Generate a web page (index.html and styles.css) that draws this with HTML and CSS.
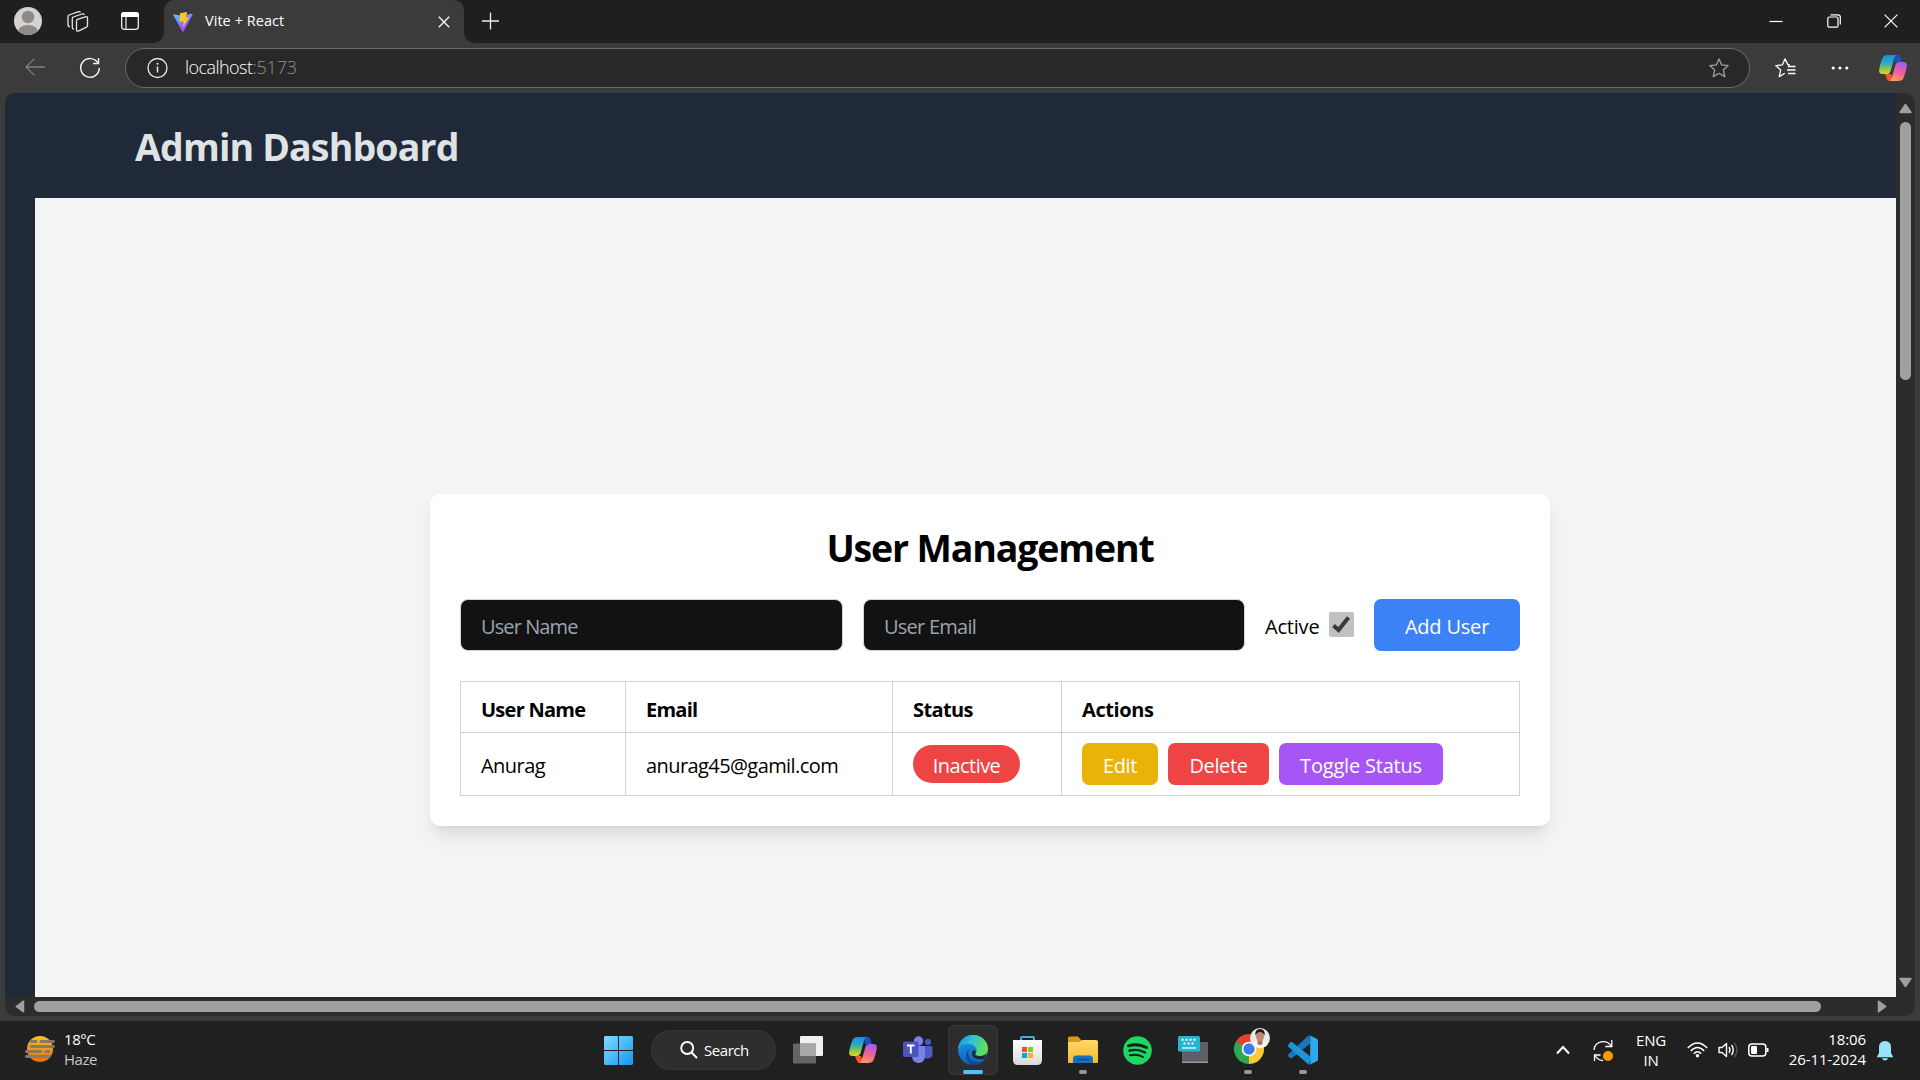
FILE: index.html
```html
<!DOCTYPE html>
<html lang="en">
<head>
<meta charset="utf-8">
<title>Vite + React</title>
<link rel="stylesheet" href="styles.css">
</head>
<body>
<svg class="defs" width="0" height="0">
  <defs>
    <linearGradient id="cpA" x1="0" y1="0" x2="0" y2="1"><stop offset="0" stop-color="#1a8bea"/><stop offset=".4" stop-color="#2aa9c0"/><stop offset=".75" stop-color="#8ecb4a"/><stop offset="1" stop-color="#f2d01c"/></linearGradient>
    <linearGradient id="cpB" x1=".6" y1="0" x2=".3" y2="1"><stop offset="0" stop-color="#a35df0"/><stop offset=".5" stop-color="#f0609b"/><stop offset="1" stop-color="#ff9a5c"/></linearGradient>
    <linearGradient id="winG" x1="0" y1="0" x2="1" y2="1"><stop offset="0" stop-color="#7fdcfb"/><stop offset="1" stop-color="#1597f3"/></linearGradient>
    <linearGradient id="viteG" x1="0" y1="0" x2=".6" y2="1"><stop offset="0" stop-color="#41d1ff"/><stop offset="1" stop-color="#bd34fe"/></linearGradient>
    <linearGradient id="edgeG" x1="0" y1="0" x2="1" y2=".3"><stop offset="0" stop-color="#1b8ede"/><stop offset=".5" stop-color="#33c1d8"/><stop offset="1" stop-color="#63e052"/></linearGradient>
    <linearGradient id="edgeB" x1="0" y1="0" x2="0" y2="1"><stop offset="0" stop-color="#1b9de2"/><stop offset="1" stop-color="#0c62bd"/></linearGradient>
    <linearGradient id="sunG" x1="0" y1="0" x2="0" y2="1"><stop offset="0" stop-color="#fcc21b"/><stop offset="1" stop-color="#e86e10"/></linearGradient>
    <linearGradient id="folderG" x1="0" y1="0" x2="0" y2="1"><stop offset="0" stop-color="#ffd968"/><stop offset="1" stop-color="#f7b92c"/></linearGradient>
    <linearGradient id="bagG" x1="0" y1="0" x2="0" y2="1"><stop offset="0" stop-color="#ffffff"/><stop offset="1" stop-color="#d9d9d9"/></linearGradient>
    <symbol id="copilot" viewBox="0 0 28 26">
      <path d="M15 0h3.500c2 0 2.600 1.300 3.100 3l1 4H16z" fill="#1b50c8"/>
      <path d="M6 19h6l2 7h-3c-2 0-3-1-3.500-3z" fill="#f4572d"/>
      <path d="M9 0h9c-2 .8-2.600 2.500-3.300 5l-3 10.500C11 18 10 19 7.500 19H3.500C1 19-.3 17.500.2 14.500 1 10 2.200 6 3.500 3 4.500.8 6 0 9 0z" fill="url(#cpA)"/>
      <path d="M19 26h-9c2-.8 2.600-2.500 3.300-5l3-10.500C17 8 18 7 20.500 7h4c2.500 0 3.800 1.500 3.300 4.500C27 16 25.800 20 24.500 23c-1 2.200-2.500 3-5.500 3z" fill="url(#cpB)"/>
    </symbol>
  </defs>
</svg>

<div class="screen">
  <header class="tabstrip">
    <div class="tools">
      <svg class="avatar" width="28" height="28" viewBox="0 0 28 28"><clipPath id="av"><circle cx="14" cy="14" r="14"/></clipPath><g clip-path="url(#av)"><rect width="28" height="28" fill="#d5d3d1"/><circle cx="14" cy="10" r="6.200" fill="#8d8a88"/><ellipse cx="14" cy="24.500" rx="10" ry="6.500" fill="#8d8a88"/></g></svg>
      <svg class="ic-spaces" width="22" height="22" viewBox="0 0 22 22" fill="none" stroke="#e6e6e6" stroke-width="1.300" stroke-linejoin="round"><path d="M9.500 10q0-1.200 1-1.600l8-2.600q2-.6 2 1v7.700q0 1.200-1 1.600l-7.700 3.700q-2.300 1-2.300-1z"/><path d="M7 18q-1.700.2-1.700-1.800V7.500q0-1 1-1.500L15 3q1.500-.5 2.300.8"/><path d="M3 15.500q-2 .2-2-1.800V5.500q0-1 1-1.500L11 .9q1.700-.6 2.500.6"/></svg>
      <svg class="ic-vtabs" width="18" height="18" viewBox="0 0 18 18"><rect x=".7" y=".7" width="16.600" height="16.600" rx="2.500" fill="none" stroke="#eee" stroke-width="1.300"/><path d="M0 5V3q0-3 3-3h12q3 0 3 3v2z" fill="#fff"/><path d="M5 5v12" stroke="#eee" stroke-width="1.200"/></svg>
    </div>
    <div class="tab">
      <svg width="20" height="20" viewBox="0 0 20 20"><path d="M0 2.200 8 3.500 18 1.800Q20 1.800 19.500 3L10.500 19.500q-.6.800-1.200 0L.2 3z" fill="url(#viteG)"/><path d="m7 1.200 6.500-1.200q.8 0 .5.800L12.500 5l3 .3q.6.100.3.800L10 15l.8-5.500H7q-.6 0-.5-.7z" fill="#ffc81f"/></svg>
      <span class="tab-title">Vite + React</span>
      <svg class="tab-close" width="12" height="12" viewBox="0 0 12 12" stroke="#f2f2f2" stroke-width="1.400"><path d="M.8.800l10.400 10.400M11.200.8.800 11.200"/></svg>
    </div>
    <svg class="plus" width="18" height="18" viewBox="0 0 18 18" stroke="#f0f0f0" stroke-width="1.300"><path d="M8.500.5v17M0 9h17"/></svg>
    <div class="winbtns">
      <svg width="14" height="14" viewBox="0 0 14 14" stroke="#fff" stroke-width="1.200"><path d="M.5 7.500h13"/></svg>
      <svg width="14" height="14" viewBox="0 0 14 14" stroke="#fff" stroke-width="1.200" fill="none"><rect x=".8" y="3" width="10.200" height="10.200" rx="1.500"/><path d="M3.500.8h7.500q2.300 0 2.300 2.300v7.500"/></svg>
      <svg width="14" height="14" viewBox="0 0 14 14" stroke="#fff" stroke-width="1.200"><path d="M.6.600l12.800 12.800M13.400.6.600 13.400"/></svg>
    </div>
  </header>

  <nav class="toolbar">
    <svg class="back" width="20" height="18" viewBox="0 0 20 18" fill="none" stroke="#808080" stroke-width="1.300"><path d="M9.500.6 1 9l8.500 8.400M1 9h19"/></svg>
    <svg class="reload" width="22" height="22" viewBox="0 0 22 22" fill="none" stroke="#f0f0f0" stroke-width="1.500"><path d="M18.900 6A9.300 9.300 0 1 0 20.300 11M14 6.500h5.500V1"/></svg>
    <div class="address">
      <svg width="22" height="22" viewBox="0 0 22 22"><circle cx="11.500" cy="11" r="9.500" fill="none" stroke="#e8e8e8" stroke-width="1.300"/><path d="M11.500 9.500v6" stroke="#e8e8e8" stroke-width="1.500"/><circle cx="11.500" cy="6.700" r="1" fill="#e8e8e8"/></svg>
      <span class="url">localhost<span class="port">:5173</span></span>
      <svg class="star" width="20" height="20" viewBox="0 0 20 20" fill="none" stroke="#a0a0a0" stroke-width="1.300" stroke-linejoin="round"><path d="m10 .9 2.700 6 6.500.7-4.900 4.300 1.500 6.700-5.800-3.400-5.800 3.400 1.500-6.700L.8 7.600l6.500-.7z"/></svg>
    </div>
    <svg class="favs" width="21" height="20" viewBox="0 0 21 20" fill="none" stroke="#fff" stroke-width="1.300" stroke-linejoin="round"><path d="M15 6.900h-2L10 .9l-2.700 6-6.500.7 4.900 4.300-1.500 6.700 5.600-3.300M13 8.500h7.500M12 12h8.500M13 15.500h7.500"/></svg>
    <svg class="more" width="18" height="4" viewBox="0 0 18 4" fill="#fff"><circle cx="2.200" cy="2" r="1.600"/><circle cx="9" cy="2" r="1.600"/><circle cx="15.800" cy="2" r="1.600"/></svg>
    <svg class="cp" width="28" height="26"><use href="#copilot"/></svg>
  </nav>

  <div class="frame">
    <div class="viewport">
      <main class="page">
        <h1 class="page-title">Admin Dashboard</h1>
        <section class="content">
          <div class="card">
            <h2 class="card-title">User Management</h2>
            <form class="form">
              <div class="field name"><span class="ph-name">User Name</span></div>
              <div class="field"><span class="ph-email">User Email</span></div>
              <label class="active"><span class="active-text">Active</span>
                <svg width="25" height="25" viewBox="0 0 25 25"><rect width="25" height="25" rx="1.500" fill="#c1c1c1"/><path d="m4.500 13.500 5 4.500L19.500 5.500" fill="none" stroke="#3a3a3a" stroke-width="4"/></svg>
              </label>
              <div class="btn add"><span>Add User</span></div>
            </form>
            <div class="table">
              <div class="row head">
                <div class="cell"><span class="th-name">User Name</span></div><div class="cell"><span class="th-email">Email</span></div><div class="cell"><span class="th-status">Status</span></div><div class="cell"><span class="th-actions">Actions</span></div>
              </div>
              <div class="row body">
                <div class="cell"><span class="td-name">Anurag</span></div><div class="cell"><span class="td-email">anurag45@gamil.com</span></div>
                <div class="cell"><span class="pill"><span>Inactive</span></span></div>
                <div class="cell actions"><div class="btn edit"><span>Edit</span></div><div class="btn delete"><span>Delete</span></div><div class="btn toggle"><span>Toggle Status</span></div></div>
              </div>
            </div>
          </div>
        </section>
      </main>
      <div class="vbar">
        <svg width="13" height="11" viewBox="0 0 13 11"><path d="M6.500 1.500 12 9.500H1z" fill="#a0a0a0" stroke="#a0a0a0" stroke-width="1.500" stroke-linejoin="round"/></svg>
        <div class="vthumb"></div>
        <svg class="down" width="13" height="11" viewBox="0 0 13 11"><path d="M6.500 9.500 12 1.500H1z" fill="#a0a0a0" stroke="#a0a0a0" stroke-width="1.500" stroke-linejoin="round"/></svg>
      </div>
      <div class="hbar">
        <svg width="10" height="13" viewBox="0 0 10 13"><path d="M1.200 6.500 8.500 1.200v10.600z" fill="#a0a0a0" stroke="#a0a0a0" stroke-width="1.500" stroke-linejoin="round"/></svg>
        <div class="hthumb"></div>
        <svg class="right" width="10" height="13" viewBox="0 0 10 13"><path d="M8.800 6.500 1.500 1.200v10.600z" fill="#a0a0a0" stroke="#a0a0a0" stroke-width="1.500" stroke-linejoin="round"/></svg>
      </div>
    </div>
  </div>

  <footer class="taskbar">
    <div class="weather">
      <svg width="30" height="26" viewBox="0 0 30 26"><circle cx="15" cy="13" r="13" fill="url(#sunG)"/><g stroke="#87796a" stroke-width="2.800" stroke-linecap="round"><path d="M6 5.500h5M16 5.500h12.500M6 10.500h22.500M1.500 15.500h14M21 15.500h3M1.500 20.500h23"/></g></svg>
      <div class="wtext"><span class="temp">18°C</span><span class="haze">Haze</span></div>
    </div>
    <div class="apps">
      <div class="app"><svg width="29" height="29" viewBox="0 0 29 29" fill="url(#winG)"><path d="M1 0h13v14H0V1zM15 0h13l1 1v13H15zM0 15h14v14H1l-1-1zM15 15h14v13l-1 1H15z"/></svg></div>
      <div class="search"><svg width="18" height="18" viewBox="0 0 18 18" fill="none" stroke="#fff" stroke-width="1.900"><circle cx="7.200" cy="7" r="6"/><path d="m11.500 11.500 5.500 5.500"/></svg><span>Search</span></div>
      <div class="app"><svg width="30" height="28" viewBox="0 0 30 28"><rect x="7" width="23" height="20" rx="1.200" fill="#f0f0f0"/><rect y="7.500" width="23" height="20" rx="1.200" fill="#6d6d6d" opacity=".9"/><path d="M7 7.500h16V20H7z" fill="#a8a8a8"/></svg></div>
      <div class="app"><svg width="28" height="26"><use href="#copilot"/></svg></div>
      <div class="app"><svg width="30" height="28" viewBox="0 0 30 28"><circle cx="15.500" cy="5" r="4.700" fill="#7b83eb"/><circle cx="25" cy="6" r="3" fill="#5059c9"/><path d="M20 10h8q1.500 0 1.500 1.500v6q0 5-5 5t-5-4z" fill="#5059c9"/><path d="M9 10h13v10q-.5 7-6.500 7T9 20z" fill="#7b83eb"/><rect y="5.500" width="15.500" height="15.500" rx="1.500" fill="#4b53bc"/><path d="M4 9.500h7.500M7.800 9.500v8" stroke="#fff" stroke-width="1.900"/></svg></div>
      <div class="app current"><svg width="30" height="30" viewBox="0 0 30 30"><circle cx="15" cy="15" r="15" fill="url(#edgeB)"/><path d="M0 14C1 5 7.500 0 15 0c9 0 15 6.500 15 13.500 0 5-4 7.500-8 7.500-3 0-5-1-4.500-2.300 3-3.200.5-9.700-7-9.700-5 0-9 2-10.500 5z" fill="url(#edgeG)"/><path d="M11 14c-3 7 2 13 10 13 3 0 5-1 6.500-2.500C24 29 20 30 16 30 8 29 6 18 11 14z" fill="#114a8b"/><path d="M17.500 18.700C16.500 20 18 21 22 21c3 0 5.500-.8 7-3l-1.800 5.500c-5 2-13 .5-13.200-4.500 0-2 .5-3.500 2-4 1.500.7 2.500 2.200 1.500 3.700z" fill="#252a2e"/></svg><i class="ind wide"></i></div>
      <div class="app store"><svg width="29" height="29" viewBox="0 0 29 29"><path d="M8 5V2q0-1 1-1h11q1 0 1 1v3" fill="none" stroke="#35b3e8" stroke-width="2"/><path d="M0 4h29v20q0 5-5 5H5q-5 0-5-5z" fill="url(#bagG)"/><path d="M9 11h5v5H9z" fill="#f1511b"/><path d="M15 11h5v5h-5z" fill="#80cc28"/><path d="M9 17h5v5H9z" fill="#00a4ef"/><path d="M15 17h5v5h-5z" fill="#fbb50a"/></svg></div>
      <div class="app"><svg width="30" height="28" viewBox="0 0 30 28"><path d="M0 8V2Q0 .5 1.500.5H10l3 3.500V8z" fill="#d99a1a"/><path d="M0 6h11l3-2h14q2 0 2 2v20q0 1-1 1H1q-1 0-1-1z" fill="url(#folderG)"/><path d="M5 27v-4q0-3.500 3.500-3.500h13q3.500 0 3.500 3.500v4z" fill="#1470c0"/><path d="M9 23.500h12" stroke="#0b4f93" stroke-width="1.500"/></svg><i class="ind"></i></div>
      <div class="app spot"><svg width="29" height="29" viewBox="0 0 29 29"><circle cx="14.500" cy="14.500" r="14.300" fill="#1ed760"/><g fill="none" stroke="#152018" stroke-linecap="round"><path d="M5.500 9.800q9.500-2.800 18 1.700" stroke-width="2.900"/><path d="M6.500 14.700q8-2.300 15.500 1.800" stroke-width="2.400"/><path d="M7 19.300q7-1.800 13 1.700" stroke-width="2"/></g></svg></div>
      <div class="app"><svg width="30" height="28" viewBox="0 0 30 28"><rect x="4" y="6" width="26" height="21" rx="1" fill="#5d6166"/><path d="M4 25.500h26V27H4z" fill="#94989c"/><rect width="22" height="15.500" rx="1.500" fill="#28b3cf"/><g stroke="#fff" stroke-width="2" stroke-dasharray="2 2"><path d="M3.500 3.800h16M5.500 7.500h12"/></g><path d="M4 12h14" stroke="#d5f4fa" stroke-width="1.500"/></svg></div>
      <div class="app"><svg class="chrome" width="38" height="38" viewBox="0 0 38 38"><path d="M17 21 4 13.500A15 15 0 0 1 30 13.500z" fill="#e8402f"/><path d="M17 21 30 13.500A15 15 0 0 1 17 36z" fill="#fcc934"/><path d="M17 21 17 36A15 15 0 0 1 4 13.500z" fill="#2da94f"/><path d="M10.500 24.500 4 13.500 17 14z" fill="#2da94f"/><path d="M4 13.500h26L17 14.200l-6.400 3z" fill="#e8402f"/><path d="m23 25-6 11 2-8z" fill="#fcc934"/><circle cx="17" cy="21" r="7.300" fill="#fff"/><circle cx="17" cy="21" r="5.700" fill="#3b7de9"/><circle cx="28" cy="10" r="10" fill="#e9e8ea"/><path d="M20.500 17q2-4 7.500-4t7.500 4q-3 3-7.500 3t-7.500-3z" fill="#faf7f7"/><path d="M25.500 11h5v5q-2.500 2-5 0z" fill="#a5705d"/><ellipse cx="28" cy="8" rx="4" ry="5.500" fill="#bd8873"/><path d="M23.500 7.500Q22.500 1 28 1t4.500 6.500Q31 4 28 4t-4.500 3.500z" fill="#241a19"/></svg><i class="ind"></i></div>
      <div class="app"><svg width="30" height="30" viewBox="0 0 30 30"><path d="M0 19.500 21 0l2 8L4 23l-1.500.5L0 21z" fill="#1678b8"/><path d="M0 10.500 2.500 7 4 7l19 15-2 8L0 11.500z" fill="#1d93d8"/><path d="M21.500.2 28 3.300q2 1 2 2.500v18.400q0 1.500-2 2.500l-6.500 3.100q.7-.8.700-2.300V2.500q0-1.500-.7-2.300z" fill="#2ba8ee"/></svg><i class="ind"></i></div>
    </div>
    <div class="tray">
      <svg class="chev" width="14" height="10" viewBox="0 0 14 10" fill="none" stroke="#fff" stroke-width="2"><path d="m1 8.500 6-6.500 6 6.500"/></svg>
      <svg class="upd" width="21" height="22" viewBox="0 0 21 22" fill="none" stroke="#fff" stroke-width="1.300"><path d="M1 10A9.200 9 0 0 1 18 6M18.800 0v6.500h-6.500M1.500 21v-6h6M2 15.500q3 5 8 5"/><circle cx="15" cy="16" r="5" fill="#ff9800" stroke="none"/></svg>
      <div class="lang"><span>ENG</span><span>IN</span></div>
      <svg class="wifi" width="21" height="16" viewBox="0 0 21 16" fill="none" stroke="#fff" stroke-width="1.500"><path d="M.8 6Q10.500-4 20.200 6M3.800 9q6.700-7 13.400 0M6.800 11.800q3.700-4 7.400 0"/><circle cx="10.500" cy="13.800" r="1.700" fill="#fff" stroke="none"/></svg>
      <svg class="vol" width="20" height="16" viewBox="0 0 20 16" fill="none" stroke="#fff" stroke-width="1.400" stroke-linejoin="round"><path d="M1 5.500h3L8.500 1.500v13L4 10.500H1zM11 5.200q2 2.800 0 5.600M13.500 3q3.500 5 0 10"/><path d="M16.500 1q5 7 0 14" stroke="#555"/></svg>
      <svg class="bat" width="21" height="14" viewBox="0 0 21 14"><rect x=".8" y="1" width="17" height="12" rx="3" fill="none" stroke="#fff" stroke-width="1.500"/><rect x="3" y="3" width="6" height="8" rx="1" fill="#fff"/><path d="M19.500 5v4" stroke="#fff" stroke-width="2"/></svg>
      <div class="clock"><span class="time">18:06</span><span class="date">26-11-2024</span></div>
      <svg class="bell" width="16" height="20" viewBox="0 0 16 20" fill="#96e3fb"><path d="M8 0q6 0 6 6.500V12l2 3.500v.7H0v-.7L2 12V6.500Q2 0 8 0zM5 17.200h6q-.5 2.300-3 2.300t-3-2.300z"/></svg>
    </div>
  </footer>
</div>
</body>
</html>
```
FILE: styles.css
```css
* { box-sizing: border-box; }
body { margin: 0; font-family: "Open Sans", "Noto Sans", sans-serif; background: #1f1f1f; overflow: hidden; }
svg { display: block; flex: none; overflow: visible; }
span { white-space: nowrap; }
.defs { position: absolute; }
.screen { width: 1920px; height: 1080px; display: flex; flex-direction: column; }

/* Browser tab strip */
.tabstrip { height: 43px; flex: none; display: flex; background: #1f1f1f; align-items: flex-start; }
.tools { width: 164px; display: flex; padding-left: 14px; }
.avatar { margin-top: 7px; }
.ic-spaces { margin: 11px 0 0 25px; }
.ic-vtabs { margin: 12px 0 0 32px; }
.tab { position: relative; width: 300px; height: 43px; background: #3b3b3b; border-radius: 10px 10px 0 0; display: flex; padding: 12px 14px 0 9px; }
.tab::before, .tab::after { content: ""; position: absolute; bottom: 0; width: 10px; height: 10px; }
.tab::before { left: -10px; background: radial-gradient(circle at 0 0, #1f1f1f 9.5px, #3b3b3b 10px); }
.tab::after { right: -10px; background: radial-gradient(circle at 100% 0, #1f1f1f 9.5px, #3b3b3b 10px); }
.tab-title { margin: -1px 0 0 12px; font-size: 14.5px; line-height: 20px; color: #fff; letter-spacing: .05px; }
.tab-close { margin: 4px 0 0 auto; }
.plus { margin: 12px 0 0 18px; }
.winbtns { margin: 14px 22px 0 auto; display: flex; gap: 43.500px; }

/* Browser toolbar */
.toolbar { height: 50px; flex: none; background: #3b3b3b; display: flex; align-items: flex-start; }
.back { margin: 15px 0 0 25px; }
.reload { margin: 14px 0 0 34px; }
.address { width: 1625px; height: 40px; margin: 5px 0 0 24px; border: 1px solid #6b6b6b; border-radius: 20px; background: #282828; display: flex; align-items: center; padding: 0 20px; }
.url { margin: -2px 0 0 17px; font-size: 18px; letter-spacing: -.55px; color: #fff; font-weight: 300; }
.port { color: #8f8f8f; letter-spacing: -.2px; }
.star { margin-left: auto; }
.favs { margin: 15px 0 0 25px; }
.more { margin: 23px 0 0 35px; }
.cp { margin: 12px 0 0 30px; }

/* Page area */
.frame { height: 928px; flex: none; background: #3b3b3b; padding: 0 5px 5px; }
.viewport { height: 923px; border-radius: 10px; overflow: hidden; background: #2c2c2c; display: grid; grid-template-columns: 1891px 19px; grid-template-rows: 904px 19px; }
.page { background: #1f2937; display: flex; flex-direction: column; padding-left: 30px; }
.page-title { margin: 0; height: 105px; padding: 29px 0 0 100px; font-size: 37.500px; line-height: 50px; font-weight: 700; letter-spacing: -.85px; color: #e0e3e6; }
.content { flex: 1; background: #f3f4f6; padding: 296px 0 0 395px; }
.vbar { display: flex; flex-direction: column; align-items: center; padding: 10px 0 9px; }
.vthumb { width: 11px; height: 258px; margin-top: 8px; border-radius: 6px; background: #a0a0a0; }
.down { margin-top: auto; }
.hbar { display: flex; align-items: center; padding: 0 9px 0 10px; }
.hthumb { width: 1787px; height: 11px; margin-left: 9px; border-radius: 6px; background: #a0a0a0; }
.right { margin-left: auto; }

/* User management card */
.card { width: 1120px; height: 332px; border-radius: 10px; background: #fff; padding: 30px; box-shadow: 0 12.500px 19px -4px rgba(0,0,0,.1), 0 5px 7.500px -5px rgba(0,0,0,.1); font-size: 20px; line-height: 30px; color: #000; }
.card-title { margin: 0 0 29px; padding-top: 1px; font-size: 37.500px; line-height: 45px; font-weight: 700; text-align: center; letter-spacing: -1.15px; }
.form { display: flex; height: 52px; margin: 0; align-items: center; }
.field { width: 382px; height: 52px; border: 1px solid #d1d5db; border-radius: 8px; background: #121212; color: #9ca3af; display: flex; align-items: center; padding: 4px 0 0 20px; margin-right: 21px; }
.name { width: 383px; margin-right: 20px; }
.ph-name { letter-spacing: -.9px; }
.ph-email { letter-spacing: -.75px; }
.active { display: flex; align-items: center; width: 89px; margin: 0 20px 0 -1px; justify-content: space-between; }
.active-text { margin-top: 4px; letter-spacing: -.2px; }
.active svg { margin-top: -1px; }
.btn { display: flex; align-items: center; justify-content: center; color: #fff; border-radius: 7px; font-weight: 500; padding-top: 4px; letter-spacing: -.2px; }
.add { width: 146px; height: 52px; background: #3b82f6; }
.table { margin-top: 30px; border: 1px solid #d1d1d1; height: 115px; }
.row { display: grid; grid-template-columns: 165px 267px 169px 1fr; }
.head { height: 51px; font-weight: 700; border-bottom: 1px solid #d1d1d1; }
.head .cell { padding-top: 5px; }
.th-name { letter-spacing: -.75px; }
.th-email { letter-spacing: -.75px; }
.th-status { letter-spacing: -.6px; }
.th-actions { letter-spacing: -.4px; }
.td-name { letter-spacing: -.55px; }
.td-email { letter-spacing: -.58px; }
.body { height: 62px; }
.cell { display: flex; align-items: center; padding: 4px 0 0 20px; border-right: 1px solid #d1d1d1; }
.cell:last-child { border-right: 0; }
.pill { width: 107px; height: 38px; border-radius: 19px; margin-top: -4px; background: #ef4444; color: #fff; display: flex; align-items: center; justify-content: center; padding-top: 4px; letter-spacing: -.55px; }
.body .actions { gap: 10px; padding-top: 0; }
.actions .btn { height: 42px; }
.edit { width: 76px; background: #eab308; }
.body .edit, .body .delete { letter-spacing: -.4px; }
.delete { width: 101px; background: #ef4444; }
.toggle { width: 164px; background: #a855f7; }

/* Taskbar */
.taskbar { height: 59px; flex: none; background: #202020; display: grid; grid-template-columns: 590px 1fr 364px; color: #fff; font-size: 15px; line-height: 20px; }
.weather { display: flex; padding: 8px 0 0 25px; gap: 9px; }
.weather svg { margin-top: 7px; }
.wtext, .lang, .clock { display: flex; flex-direction: column; }
.temp, .haze { letter-spacing: -.45px; }
.haze { color: #c8c8c8; }
.apps { display: flex; }
.app { position: relative; width: 50px; height: 50px; margin: 4px 5px 0 0; display: flex; align-items: center; justify-content: center; border-radius: 6px; }
.apps .app:first-child { margin-left: 3px; }
.store, .spot { padding-right: 1px; }
.current { background: #2d2d2d; box-shadow: inset 0 0 0 1px #383838; }
.ind { position: absolute; left: 21px; bottom: 1px; width: 8px; height: 4px; border-radius: 2px; background: #999; }
.wide { left: 15px; width: 20px; background: #4cc2ff; }
.search { width: 125px; height: 40px; margin: 9px 7px 0 3px; border-radius: 20px; background: #2e2e2e; box-shadow: inset 0 0 0 1px #363636; display: flex; align-items: center; padding-left: 29px; gap: 6px; letter-spacing: -.45px; }
.chrome { margin-top: -6px; margin-left: 6px; }
.tray { display: flex; align-items: flex-start; }
.chev { margin: 24px 0 0 0; }
.upd { margin: 19px 0 0 23px; }
.lang { width: 32px; margin: 9px 0 0 21px; align-items: center; letter-spacing: -.2px; }
.wifi { margin: 21px 0 0 20px; }
.vol { margin: 21px 0 0 10px; }
.bat { margin: 22px 0 0 10px; }
.clock { width: 97px; margin-top: 8px; align-items: flex-end; letter-spacing: -.1px; }
.bell { margin: 20px 0 0 11px; }
```
